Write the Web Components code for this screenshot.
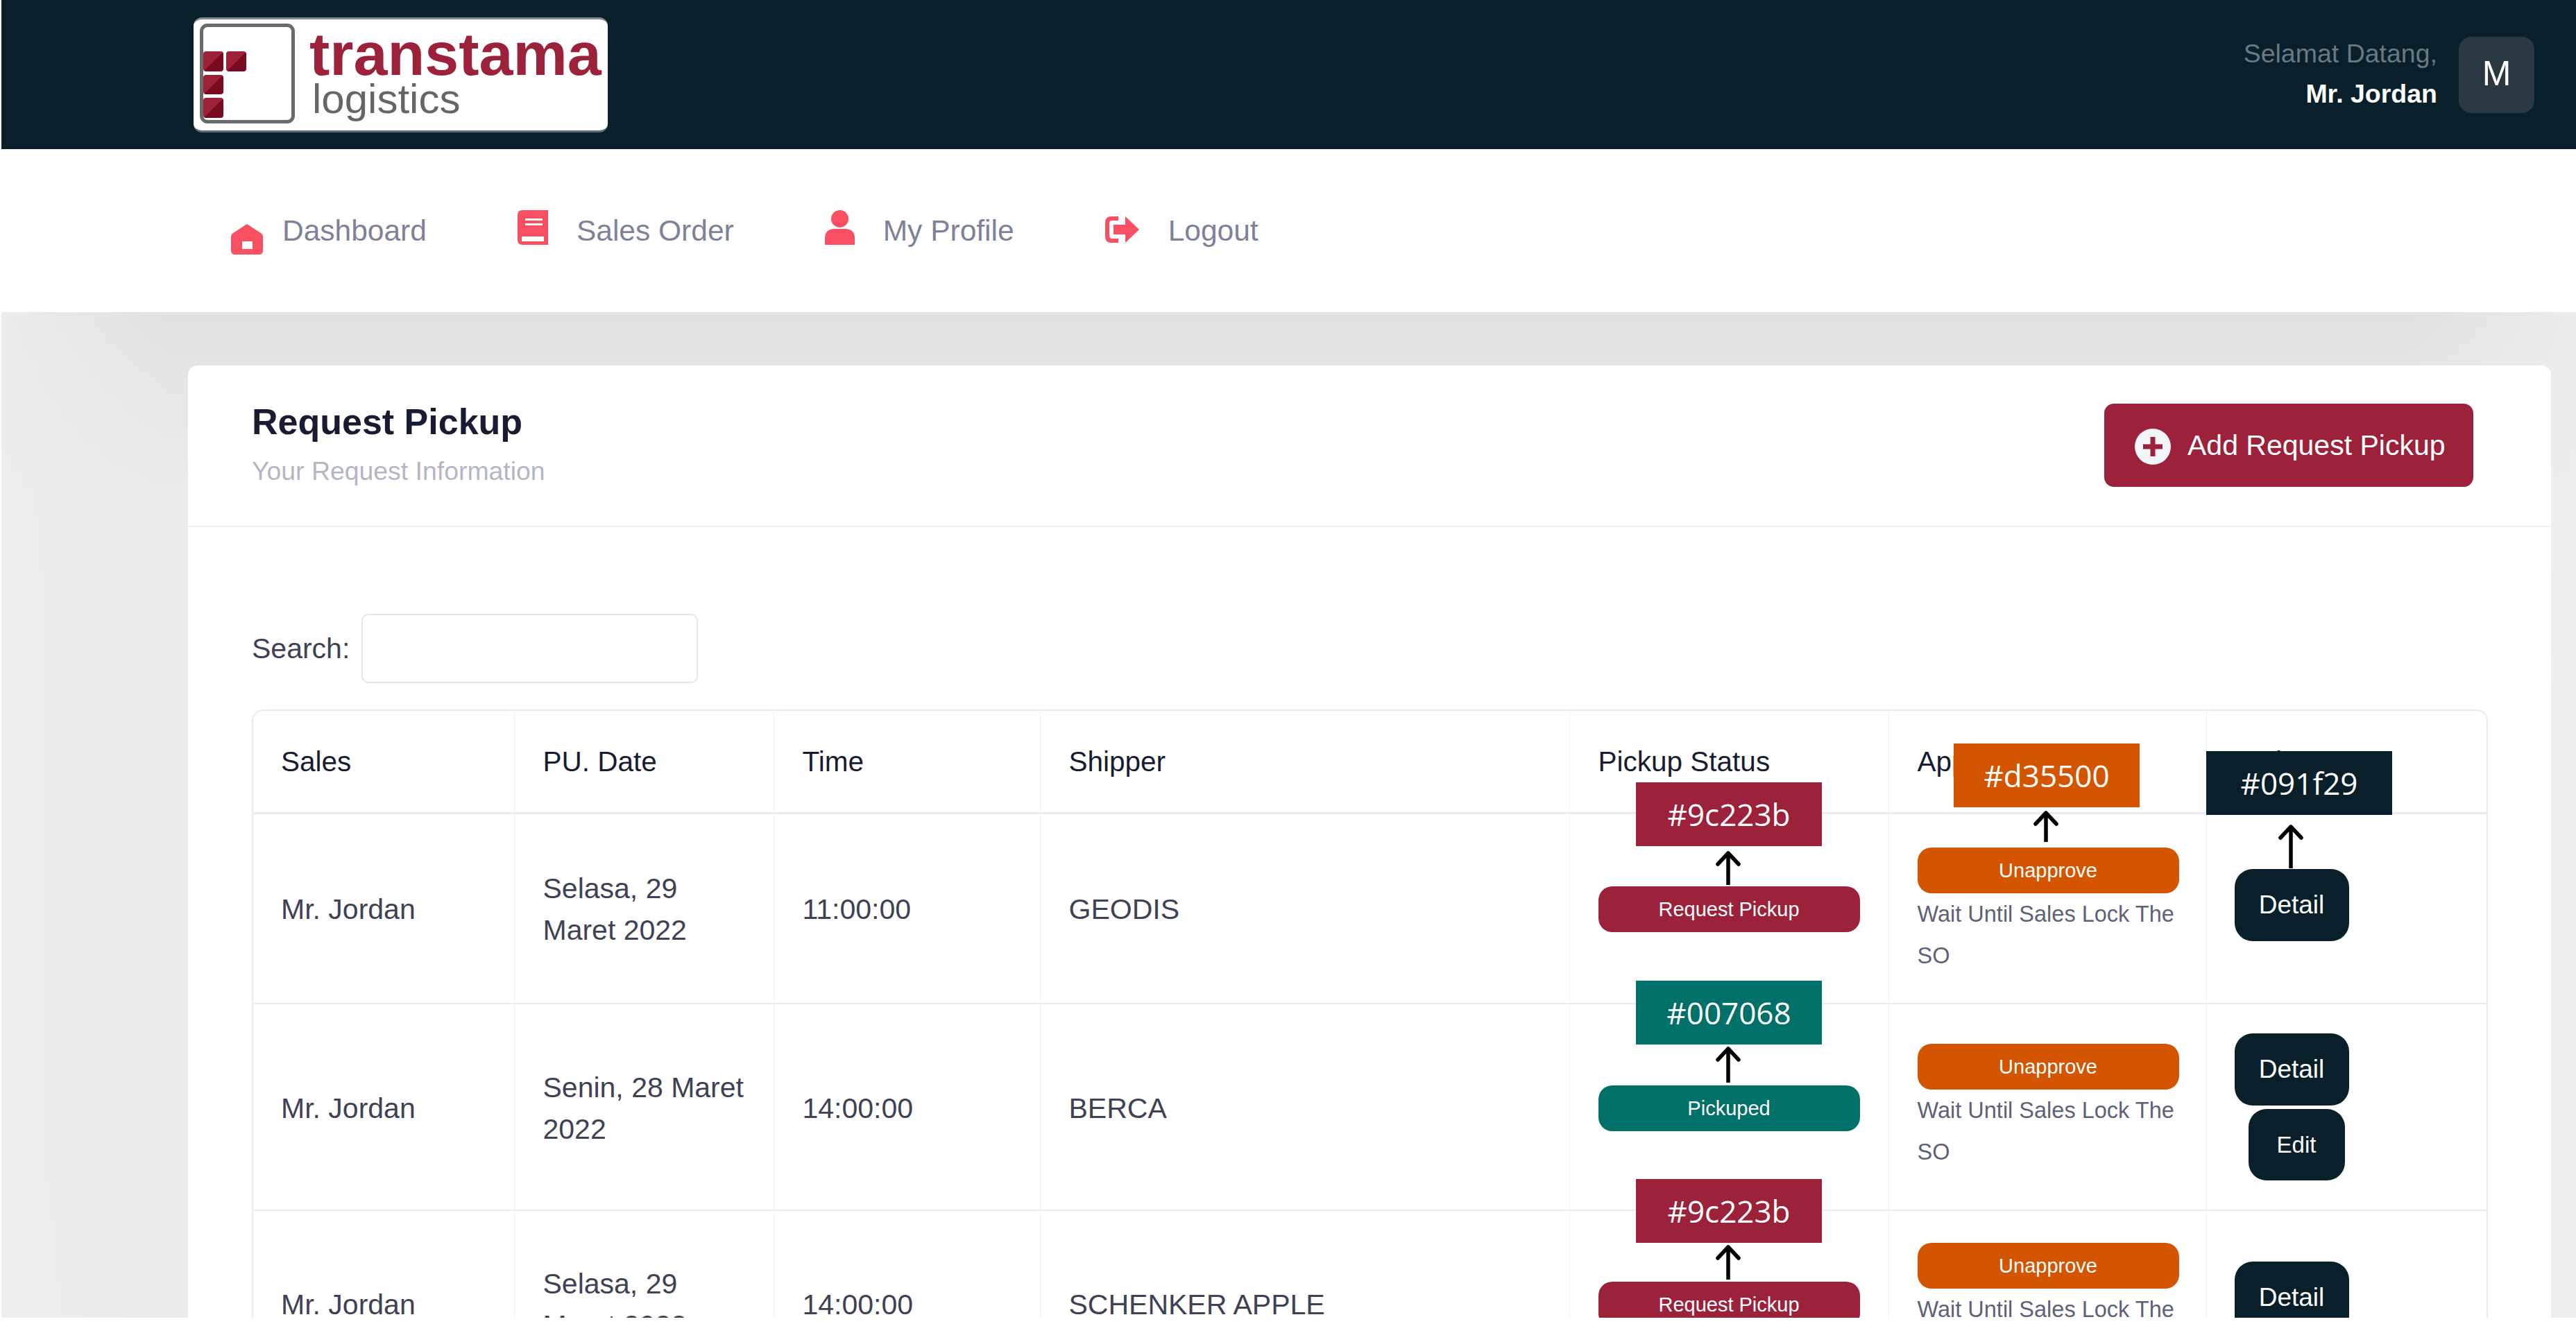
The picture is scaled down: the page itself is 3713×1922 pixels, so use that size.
<!DOCTYPE html>
<html>
<head>
<meta charset="utf-8">
<title>Request Pickup</title>
<style>
  html, body { margin: 0; background: #fff; }
  body { font-family: "Liberation Sans", Arial, sans-serif; }
</style>
</head>
<body>
<app-shell>
  <top-bar></top-bar>
  <main-nav>
    <nav-link icon="home" gap="28">Dashboard</nav-link>
    <nav-link icon="book" gap="41">Sales Order</nav-link>
    <nav-link icon="user" gap="41">My Profile</nav-link>
    <nav-link icon="logout" gap="42">Logout</nav-link>
  </main-nav>
  <page-area>
    <pickup-card>
      <pickup-table></pickup-table>
    </pickup-card>
  </page-area>

  <color-note text="#d35500" color="#d35500" x="2816" y="1072" arrow-x="133" arrow-top="97" arrow-len="45"></color-note>
  <color-note text="#091f29" color="#091f29" x="3180" y="1083" arrow-x="122" arrow-top="106" arrow-len="63"></color-note>
  <color-note text="#9c223b" color="#9c223b" x="2358" y="1128" arrow-x="133" arrow-top="99" arrow-len="49"></color-note>
  <color-note text="#007068" color="#007068" x="2358" y="1414" arrow-x="133" arrow-top="95" arrow-len="52"></color-note>
  <color-note text="#9c223b" color="#9c223b" x="2358" y="1700" arrow-x="133" arrow-top="95" arrow-len="50"></color-note>
</app-shell>

<script>
const ICONS = {
  home: `<svg width="46" height="44" viewBox="0 0 46 44" style="margin-top:25px"><path fill="#f94f63" fill-rule="evenodd" d="M23 0 L43 13 Q46 15 46 19 V38 Q46 44 40 44 H6 Q0 44 0 38 V19 Q0 15 3 13 Z M16 25 V36 H31 V25 Z"/></svg>`,
  book: `<svg width="44" height="50" viewBox="0 0 44 50" style="margin-top:-10px"><path fill="#f94f63" fill-rule="evenodd" d="M7 0 H44 V50 H7 Q0 50 0 43 V7 Q0 0 7 0 Z M11 12 V15 H36 V12 Z M11 19 V22 H36 V19 Z M6 38 V45 H38 V38 Z"/></svg>`,
  user: `<svg width="43" height="50" viewBox="0 0 43 50" style="margin-top:-10px"><ellipse cx="21.5" cy="12.5" rx="12.5" ry="12.5" fill="#f94f63"/><path fill="#f94f63" d="M0 50 V41 Q0 27 14 27 H29 Q43 27 43 41 V50 Z"/></svg>`,
  logout: `<svg width="49" height="38" viewBox="0 0 49 38" style="margin-top:-4px"><path fill="#f94f63" d="M19 0 H9 Q0 0 0 9 V29 Q0 38 9 38 H19 V32 H10 Q6 32 6 28 V10 Q6 6 10 6 H19 Z M12 12 H29 V0 L49 19 L29 38 V26 H12 Z"/></svg>`
};

class AppShell extends HTMLElement {
  constructor() {
    super();
    this.attachShadow({ mode: "open" });
    this.shadowRoot.innerHTML = `
      <style>
        :host { display: block; position: relative; height: 1900px; overflow: hidden; padding-left: 2px; font-family: "Liberation Sans", Arial, sans-serif; }
      </style>
      <slot></slot>`;
  }
}

class TopBar extends HTMLElement {
  constructor() {
    super();
    this.attachShadow({ mode: "open" });
    this.shadowRoot.innerHTML = `
      <style>
        :host { display: flex; align-items: center; justify-content: space-between; height: 215px; background: #091f29; padding: 0 60px 0 277px; }
        .logo { width: 597px; height: 166px; margin-top: 1px; box-sizing: border-box; background: #fff; border-radius: 12px; border-top: 3px solid #7d8a90; border-bottom: 3px solid #5d6d75; filter: blur(.5px); display: flex; }
        .mark { flex: none; width: 137px; height: 144px; margin: 6px 0 0 9px; box-sizing: border-box; border: 5px solid #6a6a6a; border-radius: 11px; position: relative; }
        .mark svg { position: absolute; left: 0; top: 35px; }
        .words { display: flex; flex-direction: column; margin-left: 21px; }
        .t1 { font-weight: bold; font-size: 88px; line-height: 84px; color: #9c223b; margin-top: 8px; }
        .t2 { font-size: 60px; line-height: 60px; color: #666; margin: -7px 0 0 4px; }
        .who { display: flex; align-items: center; gap: 31px; }
        .names { text-align: right; font-size: 37.5px; line-height: 58px; margin-top: -3px; }
        .hi { color: #6b7980; }
        .name { color: #fff; font-weight: bold; }
        .avatar { box-sizing: border-box; width: 109px; height: 110px; padding-bottom: 4px; border-radius: 18px; background: #2a3842; color: #fff; font-size: 50px; display: flex; align-items: center; justify-content: center; }
      </style>
      <div class="logo">
        <div class="mark">
          <svg width="70" height="98" viewBox="0 0 70 98">
            <defs><linearGradient id="sq" x1="0" y1="0" x2="1" y2="1"><stop offset=".5" stop-color="#9c2139"/><stop offset=".5" stop-color="#7a0a20"/></linearGradient></defs>
            <rect x="0" y="0" width="29" height="29" rx="4" fill="url(#sq)"/>
            <rect x="33" y="0" width="29" height="29" rx="4" fill="url(#sq)"/>
            <rect x="0" y="34" width="29" height="28" rx="4" fill="url(#sq)"/>
            <rect x="0" y="67" width="29" height="29" rx="4" fill="url(#sq)"/>
          </svg>
        </div>
        <div class="words"><span class="t1">transtama</span><span class="t2">logistics</span></div>
      </div>
      <div class="who">
        <div class="names"><div class="hi">Selamat Datang,</div><div class="name">Mr. Jordan</div></div>
        <div class="avatar">M</div>
      </div>`;
  }
}

class MainNav extends HTMLElement {
  constructor() {
    super();
    this.attachShadow({ mode: "open" });
    this.shadowRoot.innerHTML = `
      <style>
        :host { display: flex; align-items: center; height: 235px; padding-left: 331px; gap: 131px; background: #fff; }
      </style>
      <slot></slot>`;
  }
}

class NavLink extends HTMLElement {
  constructor() {
    super();
    this.attachShadow({ mode: "open" });
  }
  connectedCallback() {
    this.shadowRoot.innerHTML = `
      <style>
        :host { display: flex; align-items: center; gap: ${this.getAttribute("gap")}px; font-size: 42.5px; color: #7e8299; }
        svg { display: block; flex: none; }
      </style>
      ${ICONS[this.getAttribute("icon")]}
      <slot></slot>`;
  }
}

class PageArea extends HTMLElement {
  constructor() {
    super();
    this.attachShadow({ mode: "open" });
    this.shadowRoot.innerHTML = `
      <style>
        :host { display: block; padding: 77px 36px 0 269px; min-height: 1373px; background: linear-gradient(90deg, #eeeeeecc, #eeeeee00 240px, #eeeeee00 calc(100% - 240px), #eeeeeecc), linear-gradient(#e1e1e3, #e5e5e6 80px, #ebebeb 260px, #ececec); }
      </style>
      <slot></slot>`;
  }
}

class PickupCard extends HTMLElement {
  constructor() {
    super();
    this.attachShadow({ mode: "open" });
    this.shadowRoot.innerHTML = `
      <style>
        :host { display: block; background: #fff; border-radius: 14px 14px 0 0; }
        header { display: flex; align-items: center; justify-content: space-between; height: 231px; padding: 0 112px 0 92px; border-bottom: 2px solid #eff2f5; }
        h3 { margin: 0 0 17px; font-size: 52px; line-height: 62px; font-weight: bold; color: #181c32; }
        .titles { margin-top: -6px; }
        .sub { font-size: 37.4px; line-height: 46px; color: #b5b5c3; }
        .add { display: flex; align-items: center; gap: 24px; box-sizing: border-box; width: 532px; height: 120px; padding-left: 44px; margin-top: -1px; border-radius: 14px; background: #9c223b; color: #fff; font-size: 41px; }
        .add svg { display: block; margin-top: 3px; }
        .body { padding: 125px 91px 0 92px; }
        .search { display: flex; align-items: center; gap: 17px; height: 100px; margin-bottom: 38px; font-size: 41px; color: #3f4254; }
        .input { width: 485px; height: 100px; box-sizing: border-box; border: 2px solid #e4e6ef; border-radius: 10px; background: #fff; }
      </style>
      <header>
        <div class="titles"><h3>Request Pickup</h3><div class="sub">Your Request Information</div></div>
        <div class="add">
          <svg width="52" height="52" viewBox="0 0 52 52"><circle cx="26" cy="26" r="26" fill="#f3f6f9"/><path fill="#9c223b" d="M22.5 12 H29.5 V22.5 H40 V29.5 H29.5 V40 H22.5 V29.5 H12 V22.5 H22.5 Z"/></svg>
          <span>Add Request Pickup</span>
        </div>
      </header>
      <div class="body">
        <div class="search"><span>Search:</span><div class="input"></div></div>
        <slot></slot>
      </div>`;
  }
}

class StatusPill extends HTMLElement {
  constructor() {
    super();
    this.attachShadow({ mode: "open" });
  }
  connectedCallback() {
    this.shadowRoot.innerHTML = `
      <style>
        :host { display: flex; align-items: center; justify-content: center; width: 377px; height: 66px; border-radius: 20px; color: #fff; font-size: 29px; background: ${this.getAttribute("color")}; }
      </style>
      <slot></slot>`;
  }
}

class ActionButton extends HTMLElement {
  constructor() {
    super();
    this.attachShadow({ mode: "open" });
  }
  connectedCallback() {
    const small = this.hasAttribute("small");
    this.shadowRoot.innerHTML = `
      <style>
        :host { display: flex; align-items: center; justify-content: center; box-sizing: border-box; height: ${small ? 103 : 104}px; width: ${small ? 139 : 165}px; margin-left: ${small ? 20 : 0}px; border-radius: 26px; background: #091f29; color: #fff; font-size: ${small ? 33 : 37}px; }
      </style>
      <slot></slot>`;
  }
}

const ROWS = [
  { date: "Selasa, 29 Maret 2022", time: "11:00:00", shipper: "GEODIS", status: "Request Pickup", color: "#9c223b", actions: ["Detail"], lift: 11, top: 48, low: 2 },
  { date: "Senin, 28 Maret 2022", time: "14:00:00", shipper: "BERCA", status: "Pickuped", color: "#007068", actions: ["Detail", "Edit"], lift: 0, top: 57, low: 4 },
  { date: "Selasa, 29 Maret 2022", time: "14:00:00", shipper: "SCHENKER APPLE", status: "Request Pickup", color: "#9c223b", actions: ["Detail"], lift: 20, top: 46, low: 0 }
];

class PickupTable extends HTMLElement {
  constructor() {
    super();
    this.attachShadow({ mode: "open" });
    const rows = ROWS.map(r => {
      const pad = `style="padding-top:${38 + r.low}px;padding-bottom:38px"`;
      return `
      <tr>
        <td ${pad}>Mr. Jordan</td>
        <td ${pad}>${r.date}</td>
        <td ${pad}>${r.time}</td>
        <td ${pad}>${r.shipper}</td>
        <td ${pad}><status-pill color="${r.color}">${r.status}</status-pill></td>
        <td class="approve" style="padding-top:${r.top}px">
          <status-pill color="#d35500">Unapprove</status-pill>
          <div class="wait">Wait Until Sales Lock The SO</div>
        </td>
        <td class="act"><div style="margin-bottom:${r.lift}px;display:flex;flex-direction:column;gap:5px">${r.actions.map(a => `<action-button ${a === "Edit" ? "small" : ""}>${a}</action-button>`).join("")}</div></td>
      </tr>`;
    }).join("");
    this.shadowRoot.innerHTML = `
      <style>
        :host { display: block; box-sizing: border-box; border: 2px solid #ebebf2; border-radius: 16px 16px 0 0; font-size: 41px; color: #3f4254; }
        table { width: 100%; table-layout: fixed; border-collapse: collapse; }
        th { height: 146px; padding: 0 41px; text-align: left; font-weight: normal; font-size: 40.5px; color: #181c32; border-bottom: 3px solid #ebebf2; }
        td { padding: 42px 41px; line-height: 60px; border-bottom: 2px solid #ebebf2; vertical-align: middle; }
        th:first-child, td:first-child { padding-left: 40px; }
        th + th, td + td { border-left: 1px solid #eff2f5; }
        .approve { padding-bottom: 38px; vertical-align: top; }
        .wait { font-size: 32.5px; line-height: 60px; color: #5e6278; }
        .act { padding-left: 40px; padding-right: 0; }
      </style>
      <table>
        <colgroup><col style="width:376px"><col style="width:374px"><col style="width:384px"><col style="width:763px"><col style="width:460px"><col style="width:458px"><col></colgroup>
        <thead><tr><th>Sales</th><th>PU. Date</th><th>Time</th><th>Shipper</th><th>Pickup Status</th><th>Approval</th><th>Action</th></tr></thead>
        <tbody>${rows}</tbody>
      </table>`;
  }
}

// colour labels with arrows, laid over the table at free positions
class ColorNote extends HTMLElement {
  constructor() {
    super();
    this.attachShadow({ mode: "open" });
  }
  connectedCallback() {
    const len = +this.getAttribute("arrow-len");
    this.shadowRoot.innerHTML = `
      <style>
        :host { position: absolute; left: ${this.getAttribute("x")}px; top: ${this.getAttribute("y")}px; width: 268px; height: 92px; }
        .box { height: 92px; display: flex; align-items: center; justify-content: center; background: ${this.getAttribute("color")}; color: #fff; font-family: "Open Sans", sans-serif; font-size: 44px; }
        svg { position: absolute; left: ${+this.getAttribute("arrow-x") - 20}px; top: ${this.getAttribute("arrow-top")}px; }
      </style>
      <div class="box">${this.getAttribute("text")}</div>
      <svg width="40" height="${len}" viewBox="0 0 40 ${len}" fill="none" stroke="#000" stroke-width="5.5" stroke-linecap="round" stroke-linejoin="round"><path d="M20 3 V${len} M5 19 L20 3 L35 19"/></svg>`;
  }
}

customElements.define("app-shell", AppShell);
customElements.define("top-bar", TopBar);
customElements.define("main-nav", MainNav);
customElements.define("nav-link", NavLink);
customElements.define("page-area", PageArea);
customElements.define("pickup-card", PickupCard);
customElements.define("status-pill", StatusPill);
customElements.define("action-button", ActionButton);
customElements.define("pickup-table", PickupTable);
customElements.define("color-note", ColorNote);
</script>
</body>
</html>
